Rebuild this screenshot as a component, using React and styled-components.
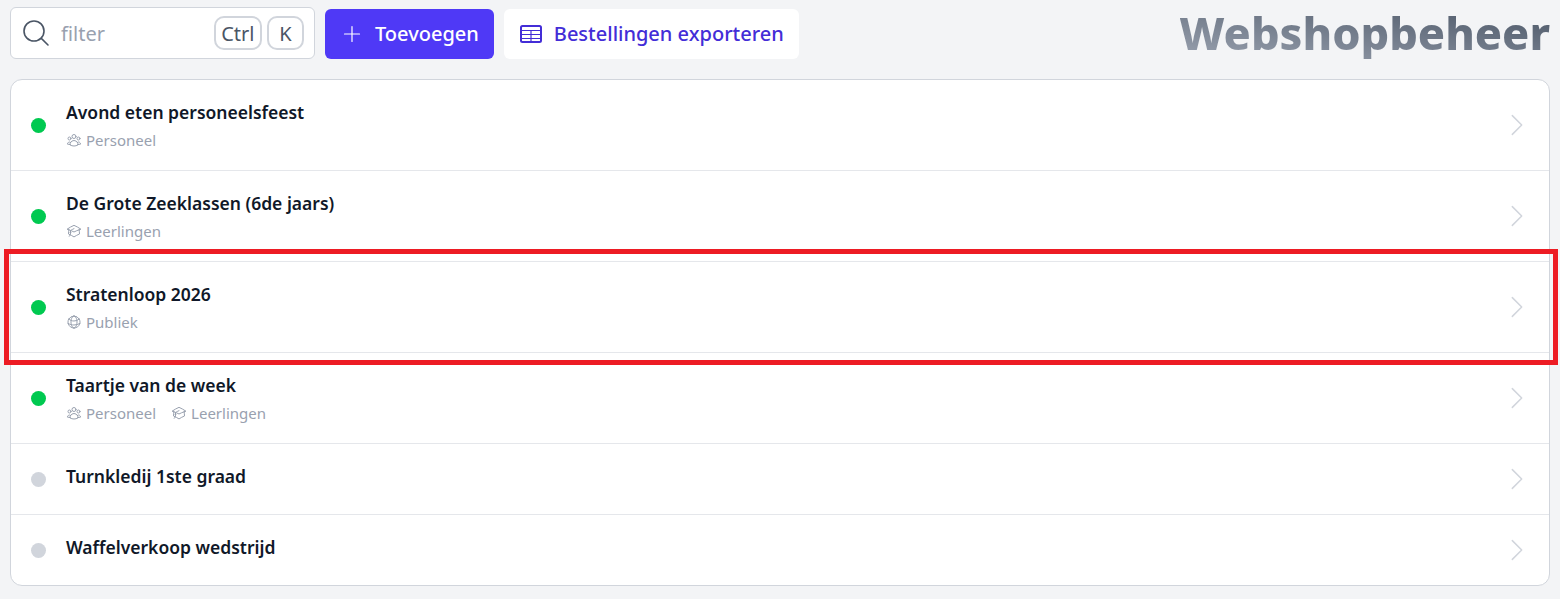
import React from "react";
import styled, { createGlobalStyle } from "styled-components";
import {
  HiOutlineUserGroup,
  HiOutlineAcademicCap,
  HiOutlineGlobeAlt,
  HiOutlineMagnifyingGlass,
  HiOutlinePlus,
  HiOutlineChevronRight,
} from "react-icons/hi2";

const Global = createGlobalStyle`
  html, body { margin: 0; padding: 0; background: #f3f4f6; }
  body { font-family: "Noto Sans", sans-serif; height: 599px; overflow: hidden; }
  * { box-sizing: border-box; }
`;

const Page = styled.div`
  position: relative;
  padding: 7px 10px 0;
  width: 1560px;
  height: 599px;
`;

const Toolbar = styled.div`
  display: flex;
  align-items: flex-end;
  gap: 10px;
  height: 52px;
  margin-bottom: 20px;
`;

const Search = styled.div`
  width: 305px;
  height: 52px;
  display: flex;
  align-items: center;
  padding: 0 10px 0 9px;
  background: #fff;
  border: 1px solid #d1d5dc;
  border-radius: 6px;
  color: #4a5565;
  svg { width: 32px; height: 32px; flex: none; }
`;

const FilterText = styled.span`
  margin-left: 9px;
  flex: 1;
  font-size: 20px;
  color: #99a1af;
`;

const Key = styled.kbd`
  height: 34px;
  min-width: 37px;
  padding: 0 5.5px;
  margin-left: 5px;
  display: flex;
  align-items: center;
  justify-content: center;
  border: 2px solid #d1d5dc;
  border-radius: 10px;
  font-family: "Noto Sans", sans-serif;
  font-size: 20px;
  color: #4a5565;
`;

const Button = styled.button`
  height: 50px;
  display: flex;
  align-items: center;
  gap: ${(p) => (p.$primary ? "11px" : "12px")};
  padding: 0 15px 0 ${(p) => (p.$primary ? "15px" : "16px")};
  border: 0;
  border-radius: 6px;
  font-family: "Noto Sans", sans-serif;
  font-size: 20px;
  font-weight: 500;
  background: ${(p) => (p.$primary ? "#4f39f6" : "#fff")};
  color: ${(p) => (p.$primary ? "#fff" : "#432dd7")};
  svg { flex: none; }
`;

const ButtonLabel = styled.span`
  padding-bottom: 2px;
`;

const PlusIcon = styled(HiOutlinePlus)`
  width: 24px;
  height: 24px;
`;

const Title = styled.h1`
  margin: 0 0 0 auto;
  align-self: center;
  font-size: 45px;
  line-height: 52px;
  font-weight: 800;
  background: linear-gradient(to top right, #99a1af, #4a5565);
  -webkit-background-clip: text;
  background-clip: text;
  color: transparent;
`;

const Card = styled.ul`
  list-style: none;
  margin: 0;
  padding: 0;
  width: 1540px;
  background: #fff;
  border: 1px solid #d1d5dc;
  border-radius: 12px;
  overflow: hidden;
`;

const Row = styled.li`
  height: ${(p) => (p.$tall ? "91px" : "71px")};
  display: flex;
  align-items: center;
  padding: 0 17px 0 20px;
  border-bottom: 1px solid #e5e7eb;
  &:last-child { border-bottom: 0; height: 70px; }
`;

const Dot = styled.span`
  width: 15px;
  height: 15px;
  border-radius: 50%;
  flex: none;
  background: ${(p) => (p.$active ? "#00c950" : "#d1d5dc")};
`;

const Body = styled.div`
  flex: 1;
  margin-left: 20px;
  min-width: 0;
  padding-bottom: ${(p) => (p.$tall ? "1px" : "6px")};
`;

const RowTitle = styled.div`
  font-size: 17.5px;
  line-height: 24px;
  font-weight: 600;
  color: #101828;
`;

const Tags = styled.div`
  display: flex;
  gap: 15px;
  margin-top: 6px;
`;

const Tag = styled.span`
  display: flex;
  align-items: center;
  gap: 4px;
  font-size: 15px;
  line-height: 20px;
  color: #99a1af;
  svg { width: 16px; height: 16px; flex: none; }
`;

const Chevron = styled(HiOutlineChevronRight)`
  width: 30px;
  height: 30px;
  color: #d1d5dc;
  flex: none;
`;

const Highlight = styled.div`
  position: absolute;
  left: 4px;
  top: 249px;
  width: 1554px;
  height: 116px;
  border: 5px solid #ed1c24;
  pointer-events: none;
`;

const TableIcon = () => (
  <svg width="22" height="18" viewBox="0 0 22 18" fill="none" stroke="currentColor">
    <rect x="1" y="1" width="20" height="16" rx="1.5" strokeWidth="2" />
    <path d="M1 5.5h20M1 9.5h20M1 13.5h20M11 5.5v11" strokeWidth="1.2" />
  </svg>
);

const icons = {
  Personeel: HiOutlineUserGroup,
  Leerlingen: HiOutlineAcademicCap,
  Publiek: HiOutlineGlobeAlt,
};

const items = [
  { name: "Avond eten personeelsfeest", active: true, tags: ["Personeel"] },
  { name: "De Grote Zeeklassen (6de jaars)", active: true, tags: ["Leerlingen"] },
  { name: "Stratenloop 2026", active: true, tags: ["Publiek"] },
  { name: "Taartje van de week", active: true, tags: ["Personeel", "Leerlingen"] },
  { name: "Turnkledij 1ste graad", active: false, tags: [] },
  { name: "Waffelverkoop wedstrijd", active: false, tags: [] },
];

export default function App() {
  return (
    <Page>
      <Global />
      <Toolbar>
        <Search>
          <HiOutlineMagnifyingGlass strokeWidth={1.2} />
          <FilterText>filter</FilterText>
          <Key>Ctrl</Key>
          <Key>K</Key>
        </Search>
        <Button $primary>
          <PlusIcon strokeWidth={1.2} />
          <ButtonLabel>Toevoegen</ButtonLabel>
        </Button>
        <Button>
          <TableIcon />
          <ButtonLabel>Bestellingen exporteren</ButtonLabel>
        </Button>
        <Title>Webshopbeheer</Title>
      </Toolbar>
      <Card>
        {items.map((it) => (
          <Row key={it.name} $tall={it.tags.length > 0}>
            <Dot $active={it.active} />
            <Body $tall={it.tags.length > 0}>
              <RowTitle>{it.name}</RowTitle>
              {it.tags.length > 0 && (
                <Tags>
                  {it.tags.map((t) => {
                    const Icon = icons[t];
                    return (
                      <Tag key={t}>
                        <Icon strokeWidth={1.5} />
                        {t}
                      </Tag>
                    );
                  })}
                </Tags>
              )}
            </Body>
            <Chevron strokeWidth={1.2} />
          </Row>
        ))}
      </Card>
      <Highlight />
    </Page>
  );
}
